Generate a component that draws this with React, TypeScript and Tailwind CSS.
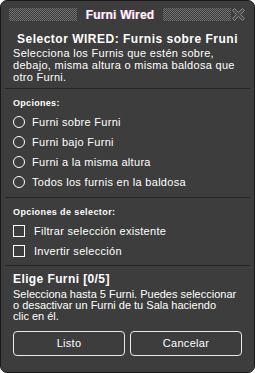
import React, { useState } from 'react';

const font = "font-['Liberation_Sans',Arial,sans-serif]";

const Dots = () => (
  <div className="flex-1 h-[13px] bg-[conic-gradient(#707070_25%,transparent_0_50%,#707070_0_75%,transparent_0)] bg-[length:2px_2px]" />
);

const CloseIcon = () => (
  <svg width="15" height="15" viewBox="0 0 15 15" className="shrink-0">
    <path
      d="M1.5 3.5 L3.5 1.5 L7.5 5.5 L11.5 1.5 L13.5 3.5 L9.5 7.5 L13.5 11.5 L11.5 13.5 L7.5 9.5 L3.5 13.5 L1.5 11.5 L5.5 7.5 Z"
      fill="#4a4a4a"
      stroke="#8a8a8a"
      strokeWidth="1"
    />
  </svg>
);

const Divider = () => <div className="h-px bg-[#262626] mx-[4px] shrink-0" />;

export default function App() {
  const [option, setOption] = useState<number | null>(null);
  const [filter, setFilter] = useState(false);
  const [invert, setInvert] = useState(false);

  const options = [
    'Furni sobre Furni',
    'Furni bajo Furni',
    'Furni a la misma altura',
    'Todos los furnis en la baldosa',
  ];

  return (
    <div className={`w-[255px] h-[373px] ${font} text-white`}>
      <div className="w-full h-full flex flex-col bg-[#3d3d3d] border border-[#1a1a1a] rounded-[7px] overflow-hidden">
        {/* Header */}
        <div className="h-[27px] flex items-center pl-[8px] pr-[8px] shrink-0">
          <Dots />
          <span className="mx-[9px] text-[12px] font-bold leading-none tracking-[0.2px] [text-shadow:0.5px_0_#d04040,-0.5px_0_#4060d0]">
            Furni Wired
          </span>
          <Dots />
          <CloseIcon />
        </div>

        {/* Intro */}
        <div className="px-[12px] pt-[4px] pb-[5px]">
          <div className="text-[12px] font-bold leading-[14px] pl-[4px] tracking-[0.5px] whitespace-nowrap">
            Selector WIRED: Furnis sobre Fruni
          </div>
          <p className="text-[11px] leading-[12px] mt-[1px] tracking-[0.3px] w-[226px]">
            Selecciona los Furnis que estén sobre, debajo, misma altura o misma baldosa que otro Furni.
          </p>
        </div>
        <Divider />

        {/* Options */}
        <div className="px-[12px] pt-[8px] pb-[9px]">
          <div className="text-[9px] font-bold leading-[12px] tracking-[0.3px]">Opciones:</div>
          <div className="flex flex-col mt-[7px] gap-[8px]">
            {options.map((o, i) => (
              <label key={i} className="flex items-center gap-[7px] h-[12px] cursor-pointer" onClick={() => setOption(i)}>
                <span className="w-[12px] h-[12px] rounded-full border border-white flex items-center justify-center shrink-0">
                  {option === i && <span className="w-[6px] h-[6px] rounded-full bg-white" />}
                </span>
                <span className="text-[11px] leading-none tracking-[0.3px]">{o}</span>
              </label>
            ))}
          </div>
        </div>
        <Divider />

        {/* Selector options */}
        <div className="px-[12px] pt-[8px] pb-[8px]">
          <div className="text-[9px] font-bold leading-[12px] tracking-[0.4px]">Opciones de selector:</div>
          <div className="flex flex-col mt-[7px] gap-[8px]">
            <label className="flex items-center gap-[9px] h-[12px] cursor-pointer" onClick={() => setFilter(!filter)}>
              <span className="w-[12px] h-[12px] border border-white shrink-0 flex items-center justify-center text-[9px]">
                {filter ? '✓' : ''}
              </span>
              <span className="text-[11px] leading-none tracking-[0.3px]">Filtrar selección existente</span>
            </label>
            <label className="flex items-center gap-[9px] h-[12px] cursor-pointer" onClick={() => setInvert(!invert)}>
              <span className="w-[12px] h-[12px] border border-white shrink-0 flex items-center justify-center text-[9px]">
                {invert ? '✓' : ''}
              </span>
              <span className="text-[11px] leading-none tracking-[0.3px]">Invertir selección</span>
            </label>
          </div>
        </div>
        <Divider />

        {/* Pick furni */}
        <div className="px-[12px] pt-[6px]">
          <div className="text-[12px] font-bold leading-[14px] tracking-[0.4px]">Elige Furni [0/5]</div>
          <p className="text-[11px] leading-[11px] mt-[3px]">
            Selecciona hasta 5 Furni. Puedes seleccionar o desactivar un Furni de tu Sala haciendo
            <br />
            clic en él.
          </p>
        </div>

        <div className="flex gap-[5px] px-[12px] mt-[9px]">
          <button className="flex-1 h-[25px] border border-[#e8e8e8] rounded-[4px] text-[11px] text-white tracking-[0.3px]">
            Listo
          </button>
          <button className="flex-1 h-[25px] border border-[#e8e8e8] rounded-[4px] text-[11px] text-white tracking-[0.3px]">
            Cancelar
          </button>
        </div>
      </div>
    </div>
  );
}
